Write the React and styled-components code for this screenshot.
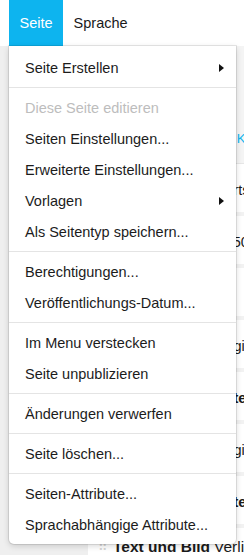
import React from 'react';
import styled, { createGlobalStyle } from 'styled-components';

const GlobalStyle = createGlobalStyle`
  html, body {
    margin: 0;
    padding: 0;
    background: #efefef;
    font-family: "Liberation Sans", Arial, Helvetica, sans-serif;
    -webkit-font-smoothing: antialiased;
  }
`;

const Page = styled.div`
  position: relative;
  width: 244px;
  height: 555px;
  overflow: hidden;
  display: flex;
  flex-direction: column;
`;

const TopBar = styled.div`
  height: 46px;
  flex: none;
  display: flex;
  padding-left: 9px;
  background: #fff;
`;

const Tab = styled.div`
  display: flex;
  align-items: center;
  padding: 0 10.5px;
  font-size: 14.5px;
  color: ${({ active }) => (active ? '#fff' : '#1a1a1a')};
  background: ${({ active }) => (active ? '#0db4ef' : 'transparent')};
`;

const Body = styled.div`
  flex: 1;
  display: flex;
`;

const Gutter = styled.div`
  width: 88px;
  flex: none;
  background: #efefef;
`;

const Panel = styled.div`
  flex: 1;
  background: #fff;
  display: flex;
  flex-direction: column;
  white-space: nowrap;
`;

const PanelHead = styled.div`
  height: 118px;
  flex: none;
  display: flex;
  align-items: flex-end;
  padding: 0 0 16px 27px;
  box-sizing: border-box;
  background: #f4f4f4;
  border-bottom: 1px solid #e6e6e6;
  font-size: 13px;
  line-height: 16px;
  color: #0db4ef;
`;

const Row = styled.div`
  height: 48px;
  flex: none;
  display: flex;
  align-items: ${({ last }) => (last ? 'flex-start' : 'center')};
  padding: ${({ last }) => (last ? '11px 0 0 27px' : '3px 0 0 27px')};
  box-sizing: border-box;
  font-size: ${({ last }) => (last ? '15.5px' : '14.5px')};
  line-height: 16px;
  color: #1a1a1a;
`;

const Bar = styled.div`
  height: 4px;
  flex: none;
  background: #f2f2f2;
`;

const Handle = styled.span`
  color: #d6d6d6;
  font-size: 13px;
  margin-left: -17px;
  margin-right: 5px;
`;

const Strong = styled.b`
  font-weight: bold;
  margin-right: 4px;
`;

const Menu = styled.div`
  position: absolute;
  top: 46px;
  left: 9px;
  width: 227px;
  background: #fff;
  border-radius: 0 0 5px 5px;
  box-shadow: 0 0 0 1px rgba(0, 0, 0, 0.09), 0 2px 6px rgba(0, 0, 0, 0.16);
`;

const Section = styled.div`
  padding: ${({ first }) => (first ? '6px 0 4px' : '4px 0')};
  border-top: ${({ first }) => (first ? 'none' : '1px solid #e4e4e4')};
`;

const Item = styled.div`
  height: 31px;
  display: flex;
  align-items: center;
  justify-content: space-between;
  padding: 0 12px 0 16px;
  font-size: 14.5px;
  color: ${({ disabled }) => (disabled ? '#bdbdbd' : '#1c1c1c')};
`;

const Caret = styled.span`
  width: 0;
  height: 0;
  border-top: 4px solid transparent;
  border-bottom: 4px solid transparent;
  border-left: 5px solid #111;
`;

const sections = [
  [{ label: 'Seite Erstellen', sub: true }],
  [
    { label: 'Diese Seite editieren', disabled: true },
    { label: 'Seiten Einstellungen...' },
    { label: 'Erweiterte Einstellungen...' },
    { label: 'Vorlagen', sub: true },
    { label: 'Als Seitentyp speichern...' },
  ],
  [{ label: 'Berechtigungen...' }, { label: 'Veröffentlichungs-Datum...' }],
  [{ label: 'Im Menu verstecken' }, { label: 'Seite unpublizieren' }],
  [{ label: 'Änderungen verwerfen' }],
  [{ label: 'Seite löschen...' }],
  [{ label: 'Seiten-Attribute...' }, { label: 'Sprachabhängige Attribute...' }],
];

// content blocks lying behind the open menu
const blocks = [
  { text: 'Hero Bereich / Startseite' },
  { text: 'Zeilen-Spalten 50:50' },
  { text: '' },
  { text: 'Kontakt Seiten: Login' },
  { text: 'Bildergalerie Raster', bold: true },
  { text: 'Kontakt Seiten: Login' },
  { text: 'Bildergalerie Raster', bold: true },
];

export default function App() {
  return (
    <>
      <GlobalStyle />
      <Page>
        <TopBar>
          <Tab active>Seite</Tab>
          <Tab>Sprache</Tab>
        </TopBar>
        <Body>
          <Gutter />
          <Panel>
            <PanelHead>ANSICHT MODERN KLASSISCH</PanelHead>
            {blocks.map((block, i) => (
              <React.Fragment key={i}>
                <Row>{block.bold ? <Strong>{block.text}</Strong> : block.text}</Row>
                <Bar />
              </React.Fragment>
            ))}
            <Row last>
              <Handle>⠿</Handle>
              <span>
                <Strong>Text und Bild</Strong>Verlinkung
              </span>
            </Row>
          </Panel>
        </Body>
        <Menu>
          {sections.map((items, i) => (
            <Section key={i} first={i === 0}>
              {items.map((item) => (
                <Item key={item.label} disabled={item.disabled}>
                  <span>{item.label}</span>
                  {item.sub && <Caret />}
                </Item>
              ))}
            </Section>
          ))}
        </Menu>
      </Page>
    </>
  );
}
